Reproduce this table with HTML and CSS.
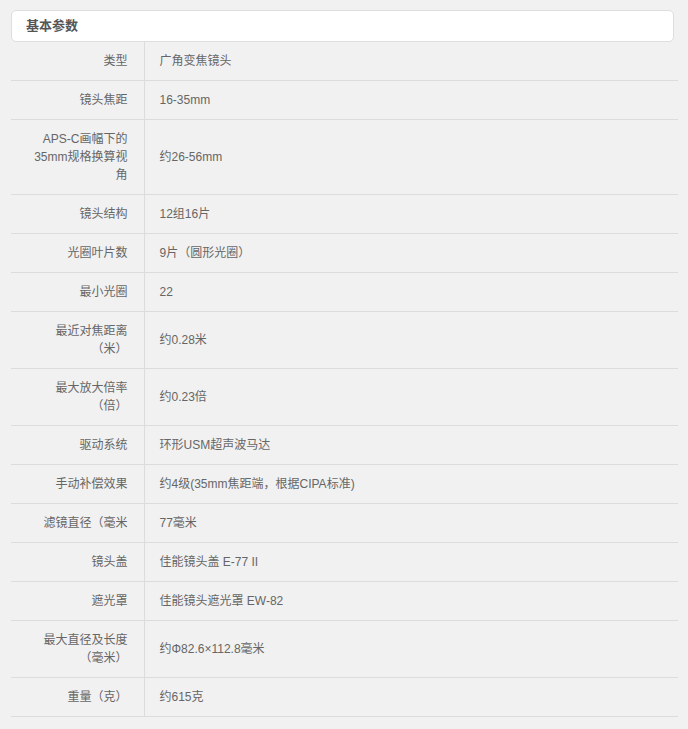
FILE: index.html
```html
<!DOCTYPE html>
<html lang="zh-CN">

<head>
    <meta charset="UTF-8">
    <meta name="viewport" content="width=device-width, initial-scale=1.0">
    <title>基本参数</title>
    <link rel="stylesheet" href="styles.css">
</head>

<body>

    <div class="params">
        <div class="params-title">基本参数</div>

        <table class="params-table">
            <tr><td class="label">类型</td><td class="value">广角变焦镜头</td></tr>
            <tr><td class="label">镜头焦距</td><td class="value">16-35mm</td></tr>
            <tr><td class="label">APS-C画幅下的35mm规格换算视角</td><td class="value">约26-56mm</td></tr>
            <tr><td class="label">镜头结构</td><td class="value">12组16片</td></tr>
            <tr><td class="label">光圈叶片数</td><td class="value">9片（圆形光圈）</td></tr>
            <tr><td class="label">最小光圈</td><td class="value">22</td></tr>
            <tr><td class="label">最近对焦距离（米）</td><td class="value">约0.28米</td></tr>
            <tr><td class="label">最大放大倍率（倍）</td><td class="value">约0.23倍</td></tr>
            <tr><td class="label">驱动系统</td><td class="value">环形USM超声波马达</td></tr>
            <tr><td class="label">手动补偿效果</td><td class="value">约4级(35mm焦距端，根据CIPA标准)</td></tr>
            <tr><td class="label">滤镜直径（毫米</td><td class="value">77毫米</td></tr>
            <tr><td class="label">镜头盖</td><td class="value">佳能镜头盖 E-77 II</td></tr>
            <tr><td class="label">遮光罩</td><td class="value">佳能镜头遮光罩 EW-82</td></tr>
            <tr><td class="label">最大直径及长度（毫米）</td><td class="value">约Φ82.6×112.8毫米</td></tr>
            <tr><td class="label">重量（克）</td><td class="value">约615克</td></tr>
        </table>
    </div>

</body>

</html>
```

FILE: styles.css
```css
/* Reset some default styles */
* {
    margin: 0;
    padding: 0;
    box-sizing: border-box;
}

body {
    font-family: 'Liberation Sans', Arial, 'Noto Sans CJK SC', sans-serif;
    background-color: #f1f1f1;
    color: #666;
    font-size: 12px;
    line-height: 18px;
}

.params {
    width: 667px;
    margin: 10px 0 0 11px;
}

.params-title {
    width: 663px;
    height: 32px;
    padding-left: 14px;
    background-color: #ffffff;
    border: 1px solid #dedede;
    border-radius: 5px;
    font-size: 13px;
    font-weight: bold;
    line-height: 30px;
    color: #555;
}

.params-table {
    width: 100%;
    border-collapse: collapse;
}

.params-table td {
    padding: 10px 16px;
    border-bottom: 1px solid #dcdcdc;
    vertical-align: middle;
}

.params-table .label {
    width: 133px;
    text-align: right;
    border-right: 1px solid #dcdcdc;
}

.params-table .value {
    padding-left: 15px;
}
```
